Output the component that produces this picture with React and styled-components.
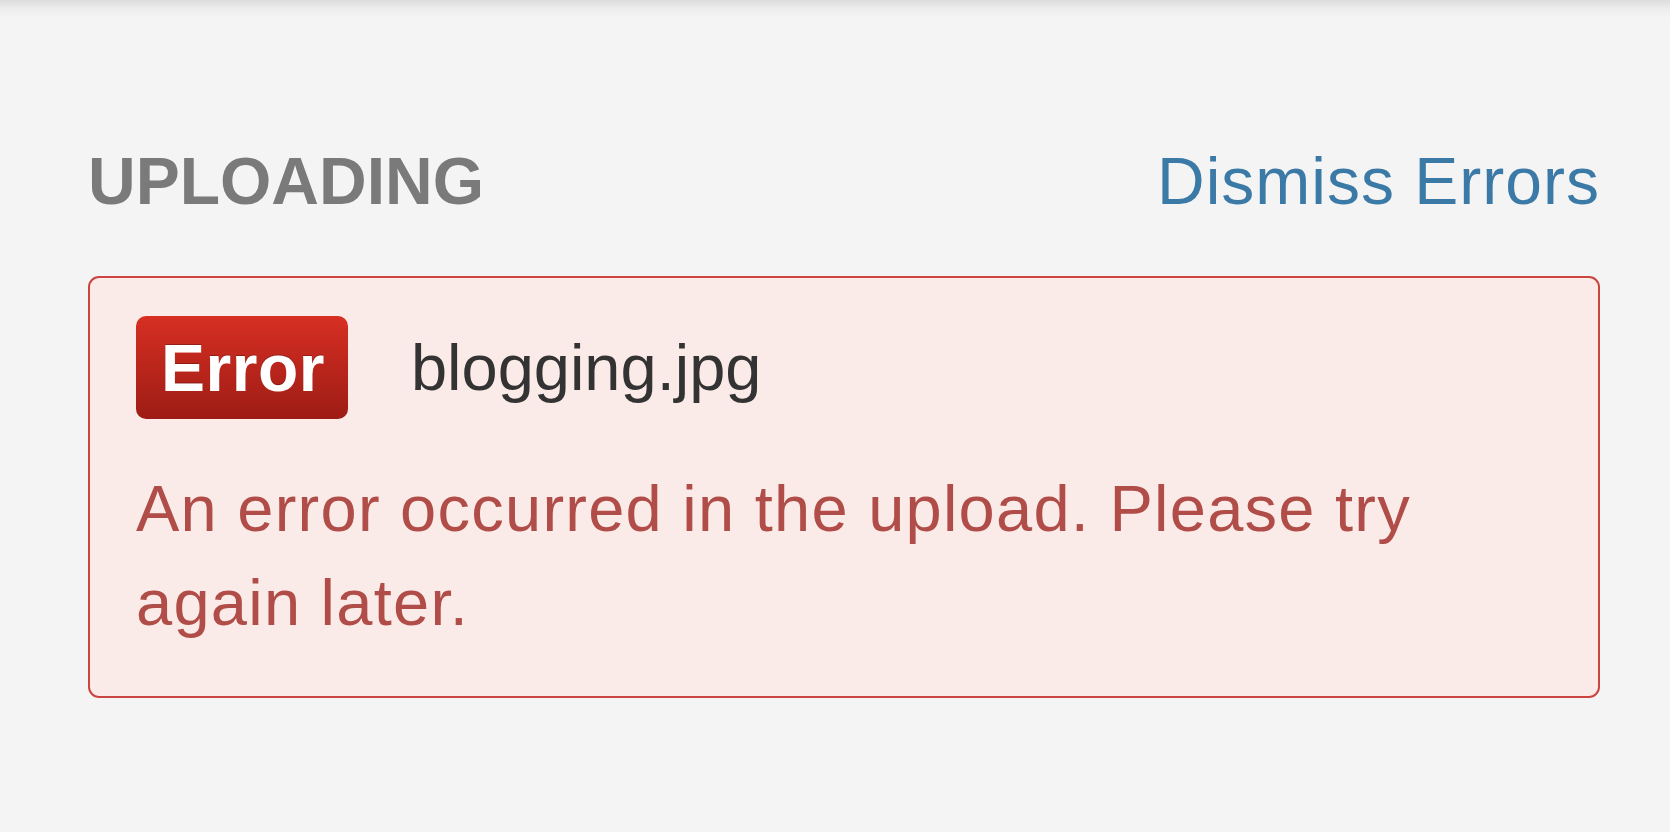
import React from "react";
import styled, { createGlobalStyle } from "styled-components";

const GlobalStyle = createGlobalStyle`
  html, body {
    margin: 0;
    height: 100%;
  }
  body {
    background: linear-gradient(#dcdcdc 0px, #ececec 8px, #f4f4f4 18px) no-repeat, #f4f4f4;
    font-family: "Liberation Sans", Arial, sans-serif;
  }
`

const StyledPage = styled.div`
  padding: 148px 70px 0 88px;
`

const StyledHeader = styled.div`
  display: flex;
  justify-content: space-between;
  align-items: baseline;
  line-height: 1;
  font-size: 66px;
`

const Title = styled.h2`
  margin: 0;
  font-size: 66px;
  font-weight: 700;
  color: #7a7a7a;
`

const DismissLink = styled.a`
  color: #3b7aa6;
  letter-spacing: 1px;
  text-decoration: none;
  cursor: pointer;
`

const StyledAlert = styled.div`
  margin-top: 62px;
  border: 2px solid #cc4540;
  border-radius: 11px;
  background: #fbebe8;
  padding: 38px 100px 46px 46px;
`

const FileRow = styled.div`
  display: flex;
  align-items: center;
  gap: 63px;
`

const Badge = styled.span`
  display: inline-block;
  font-size: 66px;
  line-height: 1;
  font-weight: 700;
  color: #fff;
  letter-spacing: 0.5px;
  padding: 19px 23px 18px 25px;
  border-radius: 10px;
  background: linear-gradient(#d72f22, #9d1c15);
  text-shadow: 0 -1px 0 rgba(0, 0, 0, 0.25);
`

const FileName = styled.span`
  font-size: 65px;
  color: #333;
`

const Message = styled.p`
  margin: 43px 0 0;
  font-size: 65px;
  line-height: 94px;
  letter-spacing: 1.25px;
  color: #b14d48;
`

const App = () => {
  return (
    <StyledPage>
      <GlobalStyle />
      <StyledHeader>
        <Title>UPLOADING</Title>
        <DismissLink>Dismiss Errors</DismissLink>
      </StyledHeader>
      <StyledAlert>
        <FileRow>
          <Badge>Error</Badge>
          <FileName>blogging.jpg</FileName>
        </FileRow>
        <Message>An error occurred in the upload. Please try again later.</Message>
      </StyledAlert>
    </StyledPage>
  );
};

export default App;
